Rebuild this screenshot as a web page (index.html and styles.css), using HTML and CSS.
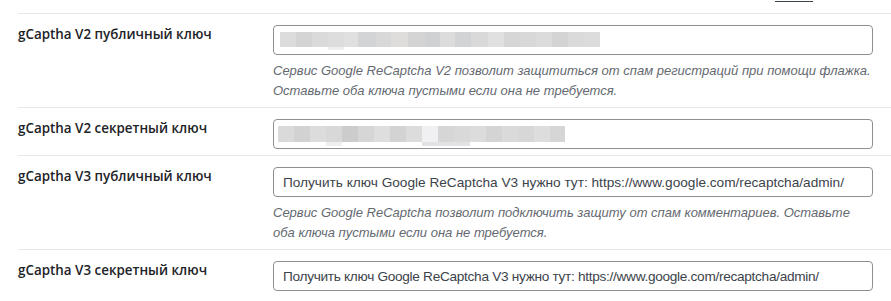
FILE: index.html
```html
<!DOCTYPE html>
<html lang="ru">
<head>
    <meta charset="UTF-8">
    <meta name="viewport" content="width=device-width, initial-scale=1.0">
    <title>Настройки gCaptha</title>
    <link rel="stylesheet" href="styles.css">
</head>
<body>
    <div class="settings">
        <div class="cut"><span class="link-line"></span></div>

        <div class="row">
            <div class="label">gCaptha V2 публичный ключ</div>
            <div class="field">
                <div class="input"><span class="blur blur-one"></span></div>
                <p class="description">Сервис Google ReCaptcha V2 позволит защититься от спам регистраций при помощи флажка. Оставьте оба ключа пустыми если она не требуется.</p>
            </div>
        </div>

        <div class="row">
            <div class="label">gCaptha V2 секретный ключ</div>
            <div class="field">
                <div class="input"><span class="blur blur-two"></span></div>
            </div>
        </div>

        <div class="row">
            <div class="label">gCaptha V3 публичный ключ</div>
            <div class="field">
                <div class="input">Получить ключ Google ReCaptcha V3 нужно тут: https://www.google.com/recaptcha/admin/</div>
                <p class="description wide">Сервис Google ReCaptcha позволит подключить защиту от спам комментариев. Оставьте оба ключа пустыми если она не требуется.</p>
            </div>
        </div>

        <div class="row">
            <div class="label">gCaptha V3 секретный ключ</div>
            <div class="field">
                <div class="input tight">Получить ключ Google ReCaptcha V3 нужно тут: https://www.google.com/recaptcha/admin/</div>
            </div>
        </div>
    </div>
</body>
</html>
```

FILE: styles.css
```css
body {
    margin: 0;
    background-color: #fff;
    color: #1d2327;
    font-family: "Liberation Sans", Arial, sans-serif;
    overflow: hidden;
}

.settings {
    padding-left: 18px;
}

/* bottom of the previous row, scrolled out of view */
.cut {
    height: 12px;
    padding-left: 757px;
}

.link-line {
    display: block;
    width: 38px;
    height: 1px;
    margin-top: 1px;
    background-color: #3c434a;
}

.row {
    display: grid;
    grid-template-columns: 255px 600px;
    border-top: 1px solid #e8e8e8;
    padding: 11px 0 6px 0;
}

.label {
    font-family: "Open Sans", sans-serif;
    font-weight: 600;
    font-size: 13.4px;
    line-height: 18px;
}

.input {
    height: 30px;
    box-sizing: border-box;
    border: 1px solid #8c8f94;
    border-radius: 4px;
    padding: 0 9px;
    display: flex;
    align-items: center;
    font-size: 13.65px;
    color: #3c434a;
    white-space: nowrap;
}

.input.tight {
    letter-spacing: -0.3px;
}

.blur {
    display: block;
    height: 15px;
}

.blur-one {
    width: 320px;
    margin: 1px 0 0 -3px;
    background:
        linear-gradient(to right, transparent 48px, #eeeeee 48px, #eeeeee 64px, transparent 64px) 0 15px / 100% 3px no-repeat,
        linear-gradient(to right,
            #dcdcdc 0, #dcdcdc 16px,
            #d4d4d4 16px, #d4d4d4 32px,
            #dadada 32px, #dadada 48px,
            #dddddd 48px, #dddddd 64px,
            #e0e0e0 64px, #e0e0e0 78px,
            #d2d4d5 78px, #d2d4d5 96px,
            #d8d8d8 96px, #d8d8d8 111px,
            #dfdddb 111px, #dfdddb 128px,
            #d4d4d4 128px, #d4d4d4 145px,
            #cfd1d3 145px, #cfd1d3 160px,
            #dcdcdc 160px, #dcdcdc 175px,
            #d2d3d4 175px, #d2d3d4 191px,
            #d9d9d9 191px, #d9d9d9 208px,
            #e0e0e0 208px, #e0e0e0 224px,
            #d6d6d6 224px, #d6d6d6 240px,
            #d8d8d8 240px, #d8d8d8 256px,
            #dbdbdb 256px, #dbdbdb 272px,
            #d4d4d4 272px, #d4d4d4 288px,
            #dadada 288px, #dadada 304px,
            #dcdcdc 304px) 0 0 / 100% 15px no-repeat;
    height: 18px;
}

.blur-two {
    width: 287px;
    margin: 4px 0 0 -5px;
    background:
        linear-gradient(to right,
            transparent 48px, #eeeeee 48px, #eeeeee 64px,
            transparent 64px, transparent 144px,
            #e2e2e4 144px, #e2e2e4 192px, transparent 192px) 0 16px / 100% 4px no-repeat,
        linear-gradient(to right,
            #dadada 0, #dadada 16px,
            #d2d2d2 16px, #d2d2d2 32px,
            #dcdcdc 32px, #dcdcdc 48px,
            #d8d8d8 48px, #d8d8d8 64px,
            #cccccc 64px, #cccccc 80px,
            #d6d6d6 80px, #d6d6d6 96px,
            #dedede 96px, #dedede 112px,
            #d3d3d3 112px, #d3d3d3 128px,
            #dcdcdc 128px, #dcdcdc 144px,
            #f0f0f2 144px, #f0f0f2 160px,
            #d6d6d6 160px, #d6d6d6 176px,
            #d9d9d9 176px, #d9d9d9 192px,
            #dcdcdc 192px, #dcdcdc 208px,
            #d4d4d4 208px, #d4d4d4 224px,
            #dadada 224px, #dadada 240px,
            #d7d7d7 240px, #d7d7d7 256px,
            #dddddd 256px, #dddddd 272px,
            #d6d6d6 272px) 0 0 / 100% 16px no-repeat;
    height: 20px;
}

.description {
    margin: 6px 0 0 0;
    font-size: 13px;
    font-style: italic;
    line-height: 20px;
    color: #646970;
}

.description.wide {
    padding-right: 20px;
}
```
